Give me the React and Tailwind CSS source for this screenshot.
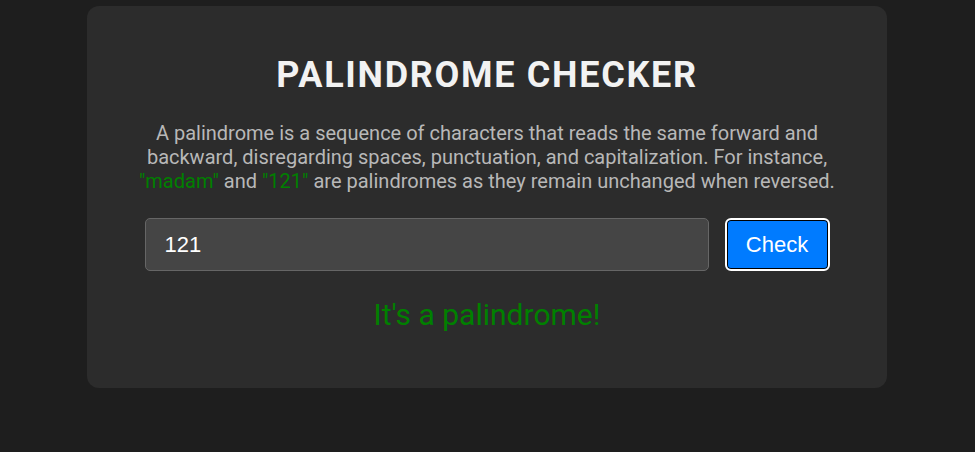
export default function App() {
  return (
    <div className="min-h-screen bg-[#1e1e1e] font-['Roboto',sans-serif]">
      <div className="ml-[87px] w-[800px] pt-[6px]">
        <div className="flex flex-col items-center rounded-[12px] bg-[#2c2c2c] px-[40px] pt-[48px] pb-[55px]">
          <h1 className="text-[36px] font-bold leading-[42px] tracking-[1.7px] text-[#f2f2f2]">
            PALINDROME CHECKER
          </h1>
          <p className="mt-[25px] text-center text-[20px] leading-[24px] text-[#b8b8b8]">
            A palindrome is a sequence of characters that reads the same forward and
            backward, disregarding spaces, punctuation, and capitalization. For instance,{" "}
            <span className="text-[#008000]">"madam"</span> and{" "}
            <span className="text-[#008000]">"121"</span> are palindromes as they remain unchanged when reversed.
          </p>
          <div className="mt-[25px] flex w-[685px] gap-[16px]">
            <input
              defaultValue="121"
              className="h-[53px] flex-1 rounded-[5px] border border-[#666] bg-[#454545] px-[19px] font-['Liberation_Sans',sans-serif] text-[22px] text-white outline-none"
            />
            <button className="h-[53px] w-[105px] rounded-[6px] border-2 border-white bg-[#007bff] font-['Liberation_Sans',sans-serif] text-[22px] text-white ring-1 ring-inset ring-black">
              Check
            </button>
          </div>
          <p className="mt-[26px] text-[30px] leading-[36px] text-[#008000]">It's a palindrome!</p>
        </div>
      </div>
    </div>
  );
}
